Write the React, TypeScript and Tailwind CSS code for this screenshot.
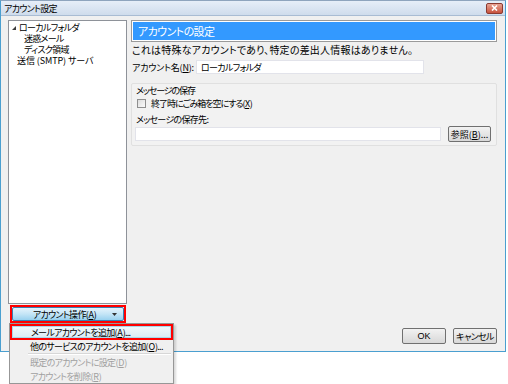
import React from "react";

const font = "font-['Noto_Sans_CJK_JP','Noto_Sans',sans-serif] [font-feature-settings:'palt']";
const ui = "text-[9px] tracking-[-0.7px]";
const btn = "border border-[#707070] rounded-[2px] bg-gradient-to-b from-[#f2f2f2] to-[#d8d8d8] flex items-center justify-center";

const MenuItem = ({label, u, rest, disabled, h}: {label: string; u: string; rest: string; disabled?: boolean; h: string}) => (
    <div className={`${h} flex items-center pl-[20px] ${ui} ${disabled ? "text-[#a0a0a0]" : "text-black"}`}>
        {label}(<span className="underline px-[0.5px]">{u}</span>){rest}
    </div>
);

const App = () => {
    return (
        <div className={`relative w-[508px] h-[384px] bg-white text-[10px] leading-none text-black whitespace-nowrap ${font}`}>
            {/* window */}
            <div className="w-[506px] h-[352px] flex flex-col bg-[#f0f0f0] border border-[#4a9fd0] border-t-[#8ea4bd]">
                <div className="h-[15px] shrink-0 flex items-center justify-between pl-[3px] pr-[2px] bg-gradient-to-b from-[#e6eef8] to-[#cfdcec] border-b border-[#a9bcd3]">
                    <span className={ui}>アカウント設定</span>
                    <div className="w-[17px] h-[11px] rounded-[2px] border border-[#8a3a30] bg-gradient-to-b from-[#e8a393] to-[#c7503c] flex items-center justify-center">
                        <svg width="7" height="6" viewBox="0 0 7 6">
                            <path d="M1 0.5 L6 5.5 M6 0.5 L1 5.5" stroke="white" strokeWidth="1.6"/>
                        </svg>
                    </div>
                </div>

                <div className="flex-1 flex pl-[7px] pt-[4px] pr-[8px] pb-[6px]">
                    {/* left column */}
                    <div className="w-[119px] flex flex-col">
                        <div className={`h-[284px] bg-white border border-[#8e9299] pt-[1px] ${ui}`}>
                            <div className="h-[11px] flex items-center pl-[2px]">
                                <svg width="6" height="6" viewBox="0 0 6 6" className="mr-[2px]">
                                    <path d="M5 1 L5 5 L1 5 Z" fill="#3c3c3c"/>
                                </svg>
                                ローカルフォルダ
                            </div>
                            <div className="h-[11px] flex items-center pl-[15px]">迷惑メール</div>
                            <div className="h-[11px] flex items-center pl-[15px]">ディスク領域</div>
                            <div className="h-[11px] flex items-center pl-[8px] tracking-[-0.1px]">送信 (SMTP) サーバ</div>
                        </div>
                        <div className="mt-[1px] ml-[2px] w-[116px] h-[18px] border-2 border-[#ff0000]">
                            <div className="h-full flex items-center border border-[#3c7fb1] rounded-[2px] bg-gradient-to-b from-[#e5f4fc] via-[#c4e5f6] to-[#98d1ef]">
                                <span className={`flex-1 text-center pl-[4px] ${ui}`}>アカウント操作(<span className="underline px-[0.5px]">A</span>)</span>
                                <svg width="5" height="3" viewBox="0 0 5 3" className="mr-[6px]">
                                    <path d="M0 0 L5 0 L2.5 3 Z" fill="#333"/>
                                </svg>
                            </div>
                        </div>
                    </div>

                    {/* right column */}
                    <div className="ml-[4px] w-[366px] flex flex-col">
                        <div className="h-[22px] border border-[#9a9a9a] p-px bg-white">
                            <div className="h-full bg-[#3399ff] flex items-center pl-[5px] text-white text-[11px] tracking-[-0.6px]">アカウントの設定</div>
                        </div>
                        <div className="mt-[2px] pl-[1px] h-[12px] flex items-center tracking-[0.2px]">これは特殊なアカウントであり、特定の差出人情報はありません。</div>
                        <div className="mt-[4px] flex items-center h-[14px] pl-[1px]">
                            <span className="w-[64px] shrink-0 text-[9px] tracking-[-0.2px]">アカウント名(<span className="underline">N</span>):</span>
                            <div className={`w-[228px] h-[14px] bg-white border border-[#e2e3ea] flex items-center pl-[4px] ${ui}`}>ローカルフォルダ</div>
                        </div>
                        <div className="mt-[9px] w-[366px] h-[63px] border border-[#e0e0e0] rounded-[2px] bg-[#f2f2f2] pt-[1px] pl-[4px] pr-[5px]">
                            <div className="h-[10px] flex items-center text-[9px] tracking-[-1.1px]">メッセージの保存</div>
                            <div className="mt-[3px] flex items-center h-[11px] pl-[1px]">
                                <div className="w-[9px] h-[9px] border border-[#8f8f8f] bg-gradient-to-br from-[#dcdcdc] to-[#fbfbfb] mr-[5px]" />
                                <span className="text-[9px] tracking-[-1px]">終了時にごみ箱を空にする(<span className="underline px-[0.5px]">X</span>)</span>
                            </div>
                            <div className={`mt-[5px] h-[11px] flex items-center ${ui}`}>メッセージの保存先:</div>
                            <div className="mt-[1px] -ml-px flex items-center">
                                <div className="w-[306px] h-[14px] bg-white border border-[#e2e3ea]" />
                                <div className={`ml-[7px] w-[43px] h-[16px] text-[9px] ${btn}`}>
                                    参照(<span className="underline">B</span>)...
                                </div>
                            </div>
                        </div>
                        <div className="flex-1" />
                        <div className="flex justify-end gap-[7px] mb-[1px]">
                            <div className={`w-[44px] h-[16px] text-[9px] font-['Liberation_Sans',sans-serif] ${btn}`}>OK</div>
                            <div className={`w-[44px] h-[16px] text-[9px] tracking-[-0.6px] ${btn}`}>キャンセル</div>
                        </div>
                    </div>
                </div>
            </div>

            {/* dropdown menu */}
            <div className="absolute left-[9px] top-[323px] w-[165px] h-[61px] bg-[#f0f0f0] border border-[#979797] shadow-[2px_2px_2px_rgba(0,0,0,0.15)] flex flex-col">
                <div className="h-[16px] shrink-0 border-2 border-[#ff0000]">
                    <div className={`h-full border border-[#a8d8eb] bg-gradient-to-b from-[#f1f8fb] to-[#daecf6] flex items-center pl-[18px] ${ui}`}>
                        メールアカウントを追加(<span className="underline px-[0.5px]">A</span>)...
                    </div>
                </div>
                <MenuItem h="h-[12px]" label="他のサービスのアカウントを追加" u="O" rest="..." />
                <div className="h-[3px] flex flex-col justify-center ml-[18px] mr-[2px]">
                    <div className="h-px bg-[#d7d7d7]" />
                    <div className="h-px bg-white" />
                </div>
                <MenuItem h="h-[14px]" label="既定のアカウントに設定" u="D" rest="" disabled />
                <MenuItem h="h-[14px]" label="アカウントを削除" u="R" rest="" disabled />
            </div>
        </div>
    );
};

export default App;
